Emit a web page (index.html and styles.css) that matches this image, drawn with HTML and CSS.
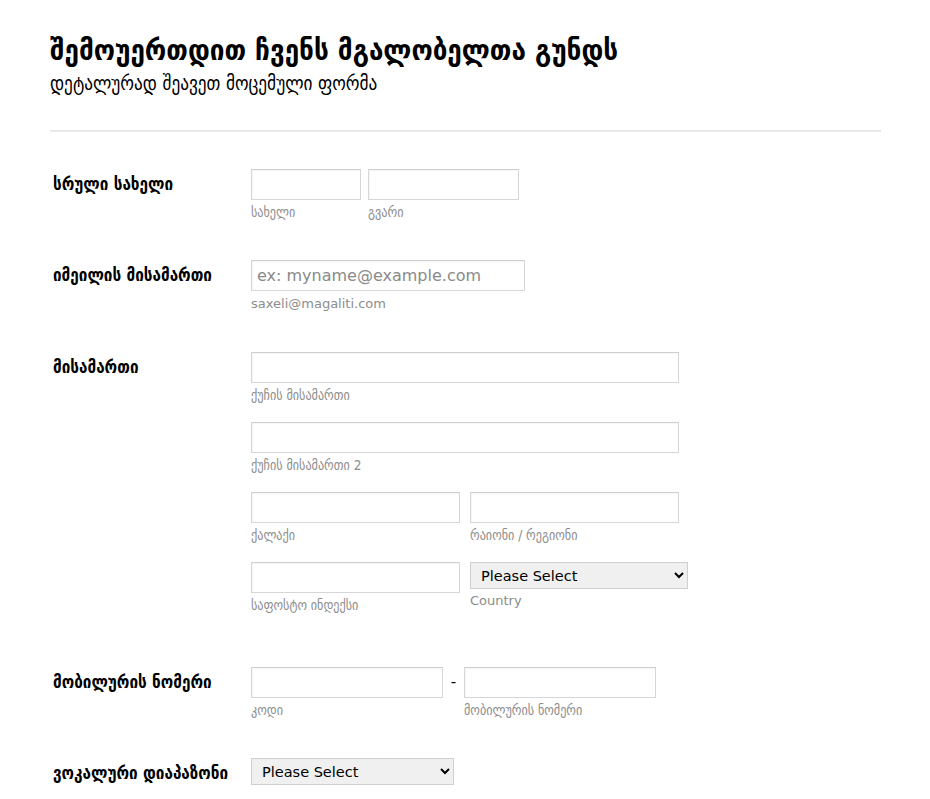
FILE: index.html
```html
<!DOCTYPE html>
<html lang="ka">
<head>
<meta charset="utf-8">
<title>ფორმა</title>
<link rel="stylesheet" href="styles.css">
</head>
<body>
<div class="page">
  <header class="header">
    <h1 class="title">შემოუერთდით ჩვენს მგალობელთა გუნდს</h1>
    <p class="subtitle">დეტალურად შეავეთ მოცემული ფორმა</p>
  </header>
  <div class="fields">
    <div class="row">
      <label class="label">სრული სახელი</label>
      <div class="control">
        <div class="line">
          <div class="part"><input class="input w-first" type="text"><span class="sub">სახელი</span></div>
          <div class="part"><input class="input w-last" type="text"><span class="sub">გვარი</span></div>
        </div>
      </div>
    </div>
    <div class="row">
      <label class="label">იმეილის მისამართი</label>
      <div class="control">
        <div class="part"><input class="input w-email" type="text" placeholder="ex: myname@example.com"><span class="sub sub-lat">saxeli@magaliti.com</span></div>
      </div>
    </div>
    <div class="row row-address">
      <label class="label">მისამართი</label>
      <div class="control stack">
        <div class="part"><input class="input w-full" type="text"><span class="sub">ქუჩის მისამართი</span></div>
        <div class="part"><input class="input w-full" type="text"><span class="sub">ქუჩის მისამართი 2</span></div>
        <div class="line gap10">
          <div class="part"><input class="input w-half" type="text"><span class="sub">ქალაქი</span></div>
          <div class="part"><input class="input w-half2" type="text"><span class="sub">რაიონი / რეგიონი</span></div>
        </div>
        <div class="line gap10">
          <div class="part"><input class="input w-half" type="text"><span class="sub">საფოსტო ინდექსი</span></div>
          <div class="part"><select class="select w-country"><option>Please Select</option></select><span class="sub sub-lat sub-country">Country</span></div>
        </div>
      </div>
    </div>
    <div class="row">
      <label class="label">მობილურის ნომერი</label>
      <div class="control">
        <div class="line">
          <div class="part"><input class="input w-phone" type="text"><span class="sub">კოდი</span></div>
          <span class="dash">-</span>
          <div class="part"><input class="input w-phone" type="text"><span class="sub">მობილურის ნომერი</span></div>
        </div>
      </div>
    </div>
    <div class="row">
      <label class="label">ვოკალური დიაპაზონი</label>
      <div class="control">
        <select class="select w-vocal"><option>Please Select</option></select>
      </div>
    </div>
  </div>
</div>
</body>
</html>
```
FILE: styles.css
```css
html, body {
  margin: 0;
  padding: 0;
  background: #ffffff;
}
body {
  font-family: "DejaVu Sans", sans-serif;
  color: #000;
}
.page {
  padding: 0 49px 0 50px;
}
.header {
  padding-top: 31px;
  padding-bottom: 35px;
  border-bottom: 2px solid #e8e8e8;
}
.title {
  margin: 0;
  font-family: "DejaVu Sans Condensed", "DejaVu Sans", sans-serif;
  font-size: 29px;
  line-height: 38px;
  font-weight: bold;
}
.subtitle {
  margin: 4px 0 0 0;
  font-family: "DejaVu Sans Condensed", "DejaVu Sans", sans-serif;
  font-size: 19.2px;
  line-height: 22px;
}
.fields {
  padding-top: 17px;
}
.row {
  display: flex;
  padding: 20px 0;
}
.row-address {
  padding-bottom: 34px;
}
.label {
  width: 198px;
  padding-left: 3px;
  padding-top: 4px;
  font-family: "DejaVu Sans Condensed", "DejaVu Sans", sans-serif;
  font-size: 17px;
  line-height: 22px;
  font-weight: bold;
  flex: none;
}
.control {
  display: flex;
  flex-direction: column;
}
.stack {
  gap: 19px;
}
.line {
  display: flex;
  align-items: flex-start;
  gap: 7px;
}
.gap10 {
  gap: 10px;
}
.part {
  display: flex;
  flex-direction: column;
}
.input {
  box-sizing: border-box;
  height: 31px;
  border: 1px solid #d6d6d6;
  border-top-color: #cfcfcf;
  box-shadow: inset 1px 1px 1px rgba(0,0,0,0.04);
  background: #fff;
  font-family: "DejaVu Sans", sans-serif;
  font-size: 16px;
  padding: 0 5px;
  margin: 0;
  outline: none;
}
.input::placeholder {
  color: #8a8a8a;
}
.w-first { width: 110px; }
.w-last { width: 151px; }
.w-email { width: 274px; }
.w-full { width: 428px; }
.w-half { width: 209px; }
.w-half2 { width: 209px; }
.w-phone { width: 192px; }
.w-country { width: 218px; }
.w-vocal { width: 203px; }
.sub {
  margin-top: 4px;
  font-family: "DejaVu Sans Condensed", "DejaVu Sans", sans-serif;
  font-size: 13.5px;
  line-height: 16px;
  color: #8c8c8c;
}
.sub-lat {
  font-family: "DejaVu Sans", sans-serif;
  font-size: 13px;
  line-height: 17px;
  color: #8c8c8c;
}
.sub-country {
  margin-top: 3px;
}
.select {
  box-sizing: border-box;
  height: 27px;
  border: 1px solid #cfcfcf;
  background: #f0f0f0;
  font-family: "DejaVu Sans", sans-serif;
  font-size: 14.5px;
  color: #000;
  padding: 0 6px;
  margin: 0;
}
.dash {
  width: 7px;
  font-size: 15px;
  line-height: 30px;
  text-align: center;
}
```
